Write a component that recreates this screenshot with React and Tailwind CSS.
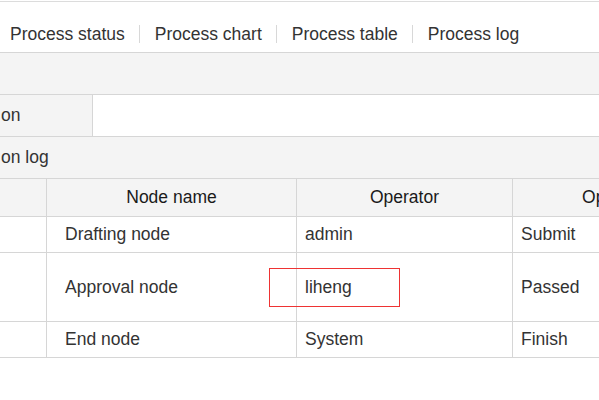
const tabs = ['Process status', 'Process chart', 'Process table', 'Process log'];

const rows = [
  { node: 'Drafting node', operator: 'admin', op: 'Submit', h: 'h-[36px]' },
  { node: 'Approval node', operator: 'liheng', op: 'Passed', h: 'h-[69px]' },
  { node: 'End node', operator: 'System', op: 'Finish', h: 'h-[36px]' },
];

export default function App() {
  return (
    <div className="relative h-[400px] w-[599px] overflow-hidden bg-white text-[17.5px] text-[#333] font-['Liberation_Sans',Arial,sans-serif]">
      <div className="mt-px border-t border-[#dcdcdc]" />

      {/* tabs */}
      <div className="flex h-[51px] items-center border-b border-[#d6d6d6] pl-[10px] pt-[14px]">
        {tabs.map((t, i) => (
          <div key={t} className="flex items-center">
            {i > 0 && <span className="ml-[14px] mr-[15px] h-[18px] w-px bg-[#d8d8d8]" />}
            <span className="whitespace-nowrap">{t}</span>
          </div>
        ))}
      </div>

      <div className="h-[42px] border-b border-[#d6d6d6] bg-[#f4f4f4]" />

      <div className="flex h-[42px] border-b border-[#d6d6d6]">
        <div className="flex w-[93px] items-center border-r border-[#d6d6d6] bg-[#f4f4f4] pl-px">on</div>
        <div className="flex-1 bg-white" />
      </div>

      <div className="flex h-[42px] items-center border-b border-[#d6d6d6] bg-[#f4f4f4] pl-px">on log</div>

      {/* node table */}
      <div className="w-[729px]">
        <div className="grid h-[38px] grid-cols-[47px_250px_216px_216px] border-b border-[#d6d6d6] bg-[#f4f4f4] text-[#1a1a1a]">
          <div className="border-r border-[#d6d6d6]" />
          <div className="flex items-center justify-center border-r border-[#d6d6d6]">Node name</div>
          <div className="flex items-center justify-center border-r border-[#d6d6d6]">Operator</div>
          <div className="flex items-center justify-center border-r border-[#d6d6d6] whitespace-nowrap">Operation</div>
        </div>
        {rows.map((r) => (
          <div key={r.node} className={`grid grid-cols-[47px_250px_216px_216px] border-b border-[#d6d6d6] ${r.h}`}>
            <div className="border-r border-[#d6d6d6]" />
            <div className="flex items-center border-r border-[#d6d6d6] pl-[18px]">{r.node}</div>
            <div className="flex items-center border-r border-[#d6d6d6] pl-[8px]">{r.operator}</div>
            <div className="flex items-center border-r border-[#d6d6d6] pl-[8px]">{r.op}</div>
          </div>
        ))}
      </div>

      {/* annotation box */}
      <div className="absolute left-[269px] top-[268px] h-[39px] w-[131px] border border-[#ee3333]" />
    </div>
  );
}
